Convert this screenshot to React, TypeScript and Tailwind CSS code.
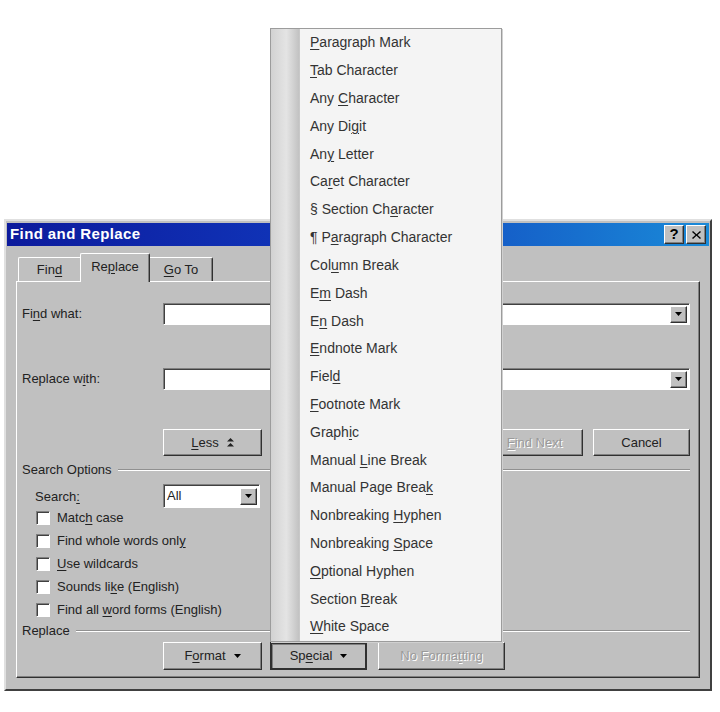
import React from "react";

// ---------------------------------------------------------------------------
// Small helpers
// ---------------------------------------------------------------------------

/** Text with one underlined access-key letter */
function Mn({ t, k }: { t: string; k?: number }) {
  if (k === undefined || k < 0) return <>{t}</>;
  return (
    <>
      {t.slice(0, k)}
      <span className="underline underline-offset-2 decoration-1">{t[k]}</span>
      {t.slice(k + 1)}
    </>
  );
}

const raised =
  "border border-t-white border-l-white border-b-[#303030] border-r-[#303030] shadow-[inset_-1px_-1px_0_#808080]";
const sunken =
  "border border-t-[#808080] border-l-[#808080] border-b-white border-r-white shadow-[inset_1px_1px_0_#404040]";

function DownTri({ className = "" }: { className?: string }) {
  return (
    <svg width="7" height="4" viewBox="0 0 7 4" className={className}>
      <path d="M0 0 H7 L3.5 4 Z" fill="#000" />
    </svg>
  );
}

function DropButton() {
  return (
    <div className={`w-[17px] h-[17px] bg-[#c0c0c0] flex items-center justify-center ${raised}`}>
      <DownTri />
    </div>
  );
}

function Button({
  label,
  k,
  w = "w-[97px]",
  disabled,
  pressed,
  children,
}: {
  label: string;
  k?: number;
  w?: string;
  disabled?: boolean;
  pressed?: boolean;
  children?: React.ReactNode;
}) {
  const border = pressed
    ? "border-2 border-[#303030] shadow-[inset_1px_1px_0_#808080]"
    : raised;
  return (
    <div
      className={`${w} h-full bg-[#c0c0c0] flex items-center justify-center gap-2 text-[13px] ${border} ${
        disabled ? "text-[#9a9a9a] [text-shadow:1px_1px_0_#ffffff]" : "text-[#222]"
      }`}
    >
      <span>
        <Mn t={label} k={k} />
      </span>
      {children}
    </div>
  );
}

function TextCombo() {
  return (
    <div className={`flex-1 h-[22px] bg-white flex items-center justify-end pr-[2px] ${sunken}`}>
      <DropButton />
    </div>
  );
}

function GroupHeader({ label, k }: { label: string; k?: number }) {
  return (
    <div className="h-[16px] flex items-center gap-[6px] text-[13px] text-[#222]">
      <span>
        <Mn t={label} k={k} />
      </span>
      <div className="flex-1 h-[2px] border-t border-t-[#909090] border-b border-b-white" />
    </div>
  );
}

function Check({ label, k }: { label: string; k?: number }) {
  return (
    <div className="h-[23px] flex items-center pl-[14px] gap-[7px] text-[13px] text-[#222]">
      <div className={`w-[14px] h-[14px] bg-white ${sunken}`} />
      <span>
        <Mn t={label} k={k} />
      </span>
    </div>
  );
}

// ---------------------------------------------------------------------------
// Special menu
// ---------------------------------------------------------------------------

const MENU: [string, number][] = [
  ["Paragraph Mark", 0],
  ["Tab Character", 0],
  ["Any Character", 4],
  ["Any Digit", 6],
  ["Any Letter", 2],
  ["Caret Character", 2],
  ["§ Section Character", 12],
  ["¶ Paragraph Character", 3],
  ["Column Break", 3],
  ["Em Dash", 1],
  ["En Dash", 1],
  ["Endnote Mark", 0],
  ["Field", 4],
  ["Footnote Mark", 0],
  ["Graphic", 5],
  ["Manual Line Break", 7],
  ["Manual Page Break", 16],
  ["Nonbreaking Hyphen", 12],
  ["Nonbreaking Space", 12],
  ["Optional Hyphen", 0],
  ["Section Break", 8],
  ["White Space", 0],
];

function SpecialMenu() {
  return (
    <div className="absolute left-[270px] top-[28px] w-[232px] h-[614px] bg-[#f4f4f4] border border-[#9c9c9c] flex shadow-[1px_1px_0_#d0d0d0]">
      <div className="w-[29px] h-full bg-[linear-gradient(to_right,#d2d2d2,#e4e4e4_55%,#c2c2c2)] border-r border-r-[#c8c8c8]" />
      <div className="flex-1 flex flex-col">
        {MENU.map(([t, k]) => (
          <div key={t} className="h-[27.86px] flex items-center pl-[10px] text-[14px] text-[#333]">
            <span>
              <Mn t={t} k={k} />
            </span>
          </div>
        ))}
      </div>
    </div>
  );
}

// ---------------------------------------------------------------------------
// Dialog
// ---------------------------------------------------------------------------

function TitleBar() {
  return (
    <div className="mx-[1px] mt-[2px] h-[23px] bg-[linear-gradient(to_right,#0c1a9c,#1034b8_40%,#1a8ad8)] flex items-center pl-[3px] pr-[3px]">
      <span className="flex-1 text-white font-bold text-[15px] tracking-[0.4px]">Find and Replace</span>
      <div className="flex gap-[2px]">
        <div className={`w-[20px] h-[19px] bg-[#c0c0c0] flex items-center justify-center font-bold text-[15px] text-black ${raised}`}>
          ?
        </div>
        <div className={`w-[20px] h-[19px] bg-[#c0c0c0] flex items-center justify-center ${raised}`}>
          <svg width="9" height="8" viewBox="0 0 9 8">
            <path d="M1 0 L4.5 3.2 L8 0 L9 1 L5.6 4 L9 7 L8 8 L4.5 4.8 L1 8 L0 7 L3.4 4 L0 1 Z" fill="#000" />
          </svg>
        </div>
      </div>
    </div>
  );
}

function Tabs() {
  return (
    <div className="mt-[7px] ml-[12px] h-[28px] flex items-end text-[13px] text-[#222] relative z-10">
      <div className="w-[62px] h-[24px] border-t border-l border-t-white border-l-white rounded-tl-[2px] flex items-center justify-center">
        <Mn t="Find" k={3} />
      </div>
      <div className="w-[70px] h-[29px] -mb-[1px] bg-[#c0c0c0] border-t border-l border-r border-t-white border-l-white border-r-[#303030] shadow-[inset_-1px_0_0_#808080] rounded-t-[2px] flex items-center justify-center pb-[3px]">
        <Mn t="Replace" k={2} />
      </div>
      <div className="w-[63px] h-[24px] border-t border-r border-t-white border-r-[#303030] shadow-[inset_-1px_0_0_#808080] rounded-tr-[2px] flex items-center justify-center">
        <Mn t="Go To" k={0} />
      </div>
    </div>
  );
}

function Panel() {
  return (
    <div className={`mx-[10px] h-[397px] flex flex-col pl-[5px] pr-[9px] text-[13px] text-[#222] ${raised}`}>
      {/* Find what */}
      <div className="mt-[21px] h-[22px] flex items-center">
        <span className="w-[141px]">
          <Mn t="Find what:" k={2} />
        </span>
        <TextCombo />
      </div>

      {/* Replace with */}
      <div className="mt-[43px] h-[22px] flex items-center">
        <span className="w-[141px]">
          <Mn t="Replace with:" k={9} />
        </span>
        <TextCombo />
      </div>

      {/* Button row */}
      <div className="mt-[39px] h-[27px] flex">
        <div className="w-[141px]" />
        <Button label="Less" k={0} w="w-[99px]">
          <svg width="7" height="9" viewBox="0 0 7 9">
            <path d="M3.5 0 L7 3.5 H0 Z M3.5 5 L7 8.5 H0 Z" fill="#222" />
          </svg>
        </Button>
        <div className="flex-1" />
        <div className="flex gap-[10px] h-full">
          <Button label="Find Next" k={0} disabled />
          <Button label="Cancel" />
        </div>
      </div>

      {/* Search options */}
      <div className="mt-[6px]">
        <GroupHeader label="Search Options" />
      </div>
      <div className="mt-[6px] h-[22px] flex items-start">
        <span className="w-[141px] pl-[13px] pt-[3px]">
          <Mn t="Search:" k={6} />
        </span>
        <div className={`w-[97px] h-[24px] bg-white flex items-center justify-between pl-[3px] pr-[2px] ${sunken}`}>
          <span>All</span>
          <DropButton />
        </div>
      </div>
      <Check label="Match case" k={4} />
      <Check label="Find whole words only" k={20} />
      <Check label="Use wildcards" k={0} />
      <Check label="Sounds like (English)" k={9} />
      <Check label="Find all word forms (English)" k={9} />

      {/* Replace */}
      <div className="mt-[2px]">
        <GroupHeader label="Replace" />
      </div>
      <div className="mt-[3px] h-[28px] flex pl-[141px]">
        <Button label="Format" k={1} w="w-[99px]">
          <DownTri />
        </Button>
        <div className="w-[8px]" />
        <Button label="Special" k={2} w="w-[97px]" pressed>
          <DownTri />
        </Button>
        <div className="w-[11px]" />
        <Button label="No Formatting" k={8} w="w-[127px]" disabled />
      </div>
    </div>
  );
}

export default function App() {
  return (
    <div className="relative w-[720px] h-[712px] bg-white overflow-hidden font-['Liberation_Sans',Arial,sans-serif]">
      <div className="pt-[219px] pl-[4px]">
        <div className="w-[708px] h-[472px] bg-[#c0c0c0] border-2 border-t-[#e0e0e0] border-l-[#e0e0e0] border-b-[#404040] border-r-[#404040] flex flex-col">
          <TitleBar />
          <Tabs />
          <Panel />
        </div>
      </div>
      <SpecialMenu />
    </div>
  );
}
